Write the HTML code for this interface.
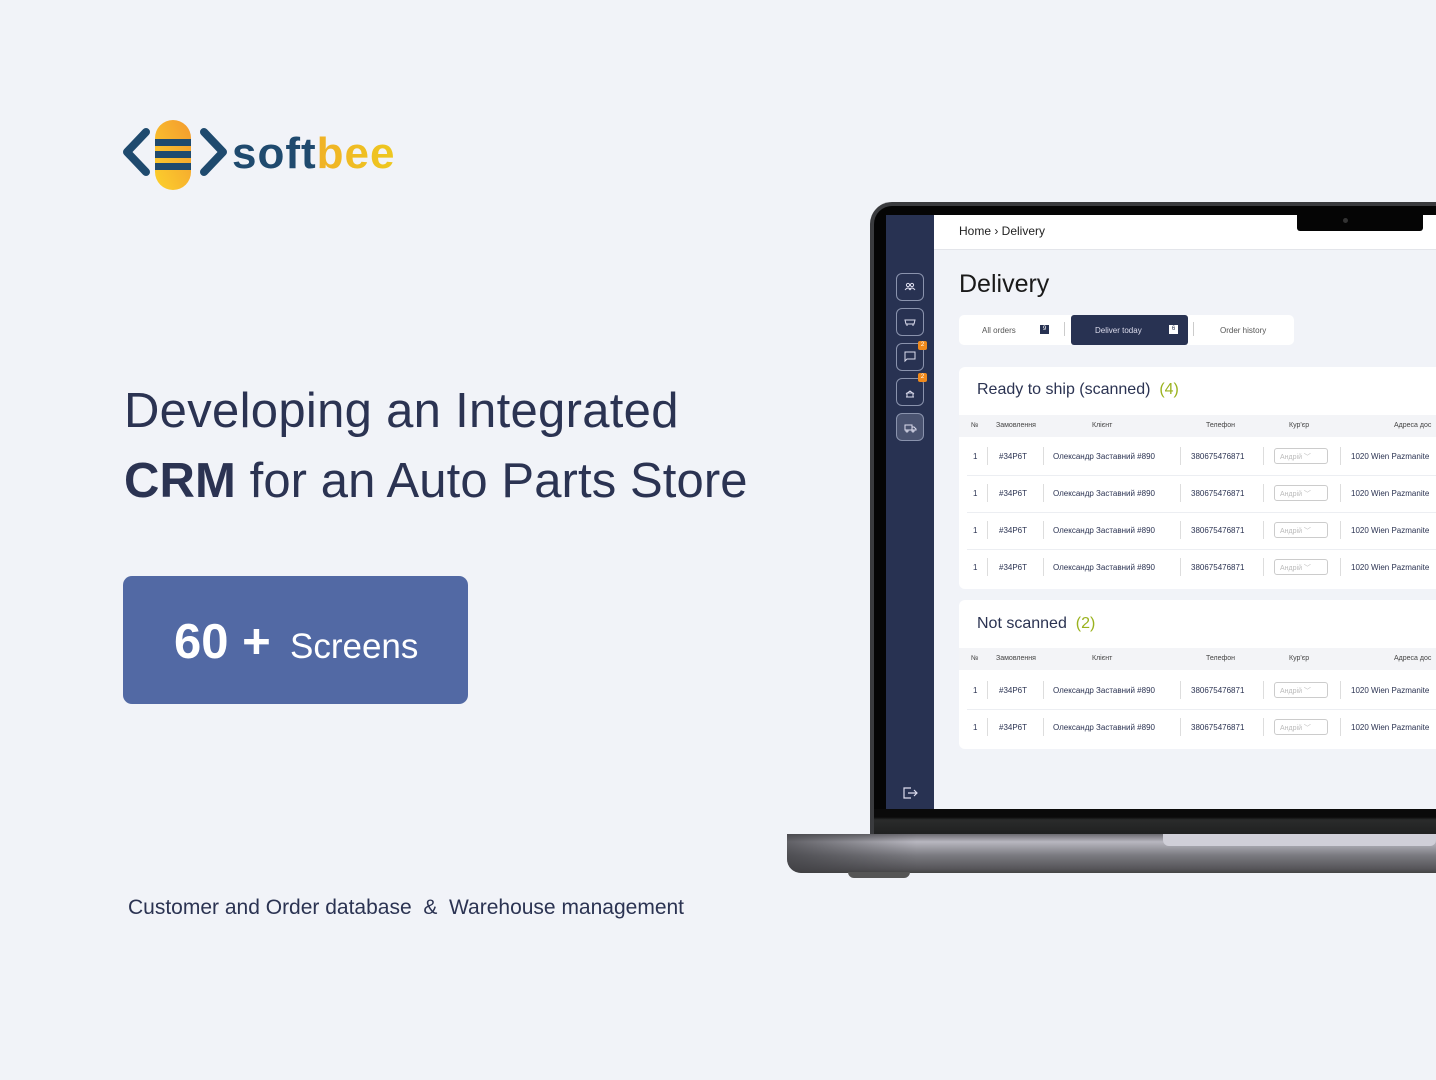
<!DOCTYPE html>
<html><head><meta charset="utf-8"><style>
*{margin:0;padding:0;box-sizing:border-box}
body{width:1436px;height:1080px;background:#f1f3f8;font-family:"Liberation Sans",sans-serif;position:relative;overflow:hidden;color:#2b3352}
.a{position:absolute}
.h{font-size:49px;color:#2b3352;white-space:nowrap;letter-spacing:0.3px}
.t{font-size:8px;color:#2b3352;white-space:nowrap}
.th{font-size:7px;color:#444;white-space:nowrap}
.sep{position:absolute;width:1px;height:18px;background:#ddd}
.sel{position:absolute;width:54px;height:16px;border:1px solid #ccc;border-radius:3px;font-size:7px;color:#bbb;padding:3px 5px}
.sb{position:absolute;left:896px;width:28px;height:28px;border:1px solid #8a93ad;border-radius:6px}
.badge{position:absolute;width:9px;height:9px;background:#f08a1c;border-radius:2px;color:#fff;font-size:6px;text-align:center;line-height:9px}
</style></head><body>

<svg class="a" style="left:120px;top:118px" width="300" height="74" viewBox="0 0 300 74">
<defs><linearGradient id="g" x1="0" y1="1" x2="1" y2="0"><stop offset="0" stop-color="#fcd12c"/><stop offset="1" stop-color="#f39a2f"/></linearGradient>
<linearGradient id="g2" x1="0" y1="0" x2="1" y2="0"><stop offset="0" stop-color="#f39a2f"/><stop offset="1" stop-color="#eec81f"/></linearGradient></defs>
<path d="M26 14 L7 34 L26 54" fill="none" stroke="#1f4a6e" stroke-width="8" stroke-linecap="round" stroke-linejoin="round"/>
<path d="M84 14 L103 34 L84 54" fill="none" stroke="#1f4a6e" stroke-width="8" stroke-linecap="round" stroke-linejoin="round"/>
<rect x="35" y="2" width="36" height="70" rx="18" fill="url(#g)"/>
<rect x="35" y="21" width="36" height="7" fill="#1f4a6e"/>
<rect x="35" y="33" width="36" height="7" fill="#1f4a6e"/>
<rect x="35" y="45" width="36" height="7" fill="#1f4a6e"/>
<text x="112" y="50" font-family="Liberation Sans,sans-serif" font-weight="bold" font-size="44" fill="#1f4a6e" letter-spacing="1">soft<tspan fill="url(#g2)">bee</tspan></text>
</svg>

<div class="a h" style="left:124px;top:383px">Developing an Integrated</div>
<div class="a h" style="left:124px;top:453px;letter-spacing:0.1px"><b>CRM</b> for an Auto Parts Store</div>

<div class="a" style="left:123px;top:576px;width:345px;height:128px;background:#5269a4;border-radius:9px;color:#fff">
 <span class="a" style="left:51px;top:38px;font-size:49px;font-weight:bold;white-space:nowrap">60 +</span>
 <span class="a" style="left:167px;top:51px;font-size:35px;white-space:nowrap">Screens</span>
</div>

<div class="a" style="left:128px;top:896px;font-size:21px;color:#2b3352;white-space:nowrap">Customer and Order database &nbsp;&amp;&nbsp; Warehouse management</div>

<div class="a" style="left:870px;top:202px;width:600px;height:640px;background:#3a3b3e;border-radius:22px 0 0 0"></div>
<div class="a" style="left:874px;top:206px;width:600px;height:630px;background:#050505;border-radius:18px 0 0 0"></div>
<div class="a" style="left:886px;top:215px;width:48px;height:594px;background:#283252"></div>
<div class="a" style="left:934px;top:215px;width:502px;height:594px;background:#f1f3f8"></div>
<div class="a" style="left:934px;top:215px;width:502px;height:35px;background:#fff;border-bottom:1px solid #e3e5ea"></div>
<div class="a" style="left:1297px;top:215px;width:126px;height:16px;background:#050505;border-radius:0 0 3px 3px"></div>
<div class="a" style="left:1343px;top:218px;width:5px;height:5px;background:#333;border-radius:50%"></div>
<div class="a" style="left:874px;top:809px;width:562px;height:27px;background:linear-gradient(#0a0a0a 0,#0a0a0a 30%,#2a2b2b 40%,#1e1f1f 100%)"></div>
<div class="a" style="left:787px;top:834px;width:649px;height:39px;border-radius:0 0 0 14px;background:linear-gradient(#6b6a70 0,#b8b7c0 20%,#7a7a80 55%,#555458 90%,#444 100%)"></div>
<div class="a" style="left:787px;top:834px;width:649px;height:39px;border-radius:0 0 0 14px;background:linear-gradient(90deg,rgba(60,60,64,.7),rgba(0,0,0,0) 20%)"></div>
<div class="a" style="left:1163px;top:834px;width:273px;height:12px;background:#d0cfd8;border-radius:0 0 6px 6px"></div>
<div class="a" style="left:848px;top:872px;width:62px;height:6px;background:#555;border-radius:0 0 6px 6px"></div>

<div class="sb" style="top:273px"></div>
<div class="sb" style="top:308px"></div>
<div class="sb" style="top:343px"></div>
<div class="sb" style="top:378px"></div>
<div class="sb" style="top:413px;background:#4a5370"></div>
<div class="badge" style="left:918px;top:341px">2</div>
<div class="badge" style="left:918px;top:373px">2</div>
<svg class="a" style="left:896px;top:273px" width="28" height="170" viewBox="0 0 28 170" fill="none" stroke="#dde" stroke-width="1">
<circle cx="12" cy="12" r="1.6"/><circle cx="16" cy="12" r="1.6"/><path d="M9 17q3-4 6 0M13 17q3-4 6 0"/>
<path d="M9 47h10l-1 4h-8zM11 51v2M17 51v2"/>
<path d="M9 79h10v7h-8l-2 2z"/>
<path d="M10 121l4-3 4 3M11 120h6v4h-6zM10 124h8"/>
<path d="M9 152h7v5h-7zM16 154h2l2 2v1h-4"/><circle cx="11" cy="158" r="1"/><circle cx="17" cy="158" r="1"/>
</svg>
<svg class="a" style="left:902px;top:786px" width="16" height="14" viewBox="0 0 16 14" fill="none" stroke="#dde" stroke-width="1.2"><path d="M9 2H2v10h7M6 7h9M12 4l3 3-3 3"/></svg>

<div class="a" style="left:959px;top:224px;font-size:12px;color:#222;white-space:nowrap">Home &rsaquo; Delivery</div>
<div class="a" style="left:959px;top:270px;font-size:25px;color:#1a1a1a">Delivery</div>
<div class="a" style="left:959px;top:315px;width:335px;height:30px;background:#fff;border-radius:5px"></div>
<div class="a" style="left:1071px;top:315px;width:117px;height:30px;background:#283252;border-radius:3px"></div>
<div class="a t" style="left:982px;top:326px;color:#555">All orders</div>
<div class="a" style="left:1040px;top:325px;width:9px;height:9px;background:#283252;color:#fff;font-size:6px;text-align:center;line-height:9px">9</div>
<div class="a" style="left:1064px;top:322px;width:1px;height:14px;background:#ccc"></div>
<div class="a t" style="left:1095px;top:326px;color:#dde">Deliver today</div>
<div class="a" style="left:1169px;top:325px;width:9px;height:9px;background:#fff;color:#283252;font-size:6px;text-align:center;line-height:9px">6</div>
<div class="a" style="left:1193px;top:322px;width:1px;height:14px;background:#ccc"></div>
<div class="a t" style="left:1220px;top:326px;color:#555">Order history</div>

<div class="a" style="left:959px;top:367px;width:490px;height:222px;background:#fff;border-radius:6px"></div>
<div class="a" style="left:977px;top:381px;font-size:16px;color:#2b3352;white-space:nowrap">Ready to ship (scanned) &nbsp;<span style="color:#9ab21e">(4)</span></div>
<div class="a" style="left:959px;top:415px;width:477px;height:22px;background:#f3f4f7"></div>
<div class="a th" style="left:971px;top:422px">№</div><div class="a th" style="left:996px;top:422px">Замовлення</div><div class="a th" style="left:1092px;top:422px">Клієнт</div><div class="a th" style="left:1206px;top:422px">Телефон</div><div class="a th" style="left:1289px;top:422px">Кур'єр</div><div class="a th" style="left:1394px;top:422px">Адреса дос</div>

<div class="a" style="left:959px;top:600px;width:490px;height:149px;background:#fff;border-radius:6px"></div>
<div class="a" style="left:977px;top:615px;font-size:16px;color:#2b3352;white-space:nowrap">Not scanned &nbsp;<span style="color:#9ab21e">(2)</span></div>
<div class="a" style="left:959px;top:648px;width:477px;height:22px;background:#f3f4f7"></div>
<div class="a th" style="left:971px;top:655px">№</div><div class="a th" style="left:996px;top:655px">Замовлення</div><div class="a th" style="left:1092px;top:655px">Клієнт</div><div class="a th" style="left:1206px;top:655px">Телефон</div><div class="a th" style="left:1289px;top:655px">Кур'єр</div><div class="a th" style="left:1394px;top:655px">Адреса дос</div>

<div class="a" style="left:0;top:447px"><div class="a t" style="left:973px;top:5px">1</div><div class="sep" style="left:987px"></div><div class="a t" style="left:999px;top:5px">#34P6T</div><div class="sep" style="left:1043px"></div><div class="a t" style="left:1053px;top:5px">Олександр Заставний #890</div><div class="sep" style="left:1180px"></div><div class="a t" style="left:1191px;top:5px">380675476871</div><div class="sep" style="left:1263px"></div><div class="sel" style="left:1274px;top:1px">Андрій ﹀</div><div class="sep" style="left:1340px"></div><div class="a t" style="left:1351px;top:5px">1020 Wien Pazmanite</div><div class="a" style="left:967px;top:28px;width:469px;height:1px;background:#eceef2"></div></div>
<div class="a" style="left:0;top:484px"><div class="a t" style="left:973px;top:5px">1</div><div class="sep" style="left:987px"></div><div class="a t" style="left:999px;top:5px">#34P6T</div><div class="sep" style="left:1043px"></div><div class="a t" style="left:1053px;top:5px">Олександр Заставний #890</div><div class="sep" style="left:1180px"></div><div class="a t" style="left:1191px;top:5px">380675476871</div><div class="sep" style="left:1263px"></div><div class="sel" style="left:1274px;top:1px">Андрій ﹀</div><div class="sep" style="left:1340px"></div><div class="a t" style="left:1351px;top:5px">1020 Wien Pazmanite</div><div class="a" style="left:967px;top:28px;width:469px;height:1px;background:#eceef2"></div></div>
<div class="a" style="left:0;top:521px"><div class="a t" style="left:973px;top:5px">1</div><div class="sep" style="left:987px"></div><div class="a t" style="left:999px;top:5px">#34P6T</div><div class="sep" style="left:1043px"></div><div class="a t" style="left:1053px;top:5px">Олександр Заставний #890</div><div class="sep" style="left:1180px"></div><div class="a t" style="left:1191px;top:5px">380675476871</div><div class="sep" style="left:1263px"></div><div class="sel" style="left:1274px;top:1px">Андрій ﹀</div><div class="sep" style="left:1340px"></div><div class="a t" style="left:1351px;top:5px">1020 Wien Pazmanite</div><div class="a" style="left:967px;top:28px;width:469px;height:1px;background:#eceef2"></div></div>
<div class="a" style="left:0;top:558px"><div class="a t" style="left:973px;top:5px">1</div><div class="sep" style="left:987px"></div><div class="a t" style="left:999px;top:5px">#34P6T</div><div class="sep" style="left:1043px"></div><div class="a t" style="left:1053px;top:5px">Олександр Заставний #890</div><div class="sep" style="left:1180px"></div><div class="a t" style="left:1191px;top:5px">380675476871</div><div class="sep" style="left:1263px"></div><div class="sel" style="left:1274px;top:1px">Андрій ﹀</div><div class="sep" style="left:1340px"></div><div class="a t" style="left:1351px;top:5px">1020 Wien Pazmanite</div></div>
<div class="a" style="left:0;top:681px"><div class="a t" style="left:973px;top:5px">1</div><div class="sep" style="left:987px"></div><div class="a t" style="left:999px;top:5px">#34P6T</div><div class="sep" style="left:1043px"></div><div class="a t" style="left:1053px;top:5px">Олександр Заставний #890</div><div class="sep" style="left:1180px"></div><div class="a t" style="left:1191px;top:5px">380675476871</div><div class="sep" style="left:1263px"></div><div class="sel" style="left:1274px;top:1px">Андрій ﹀</div><div class="sep" style="left:1340px"></div><div class="a t" style="left:1351px;top:5px">1020 Wien Pazmanite</div><div class="a" style="left:967px;top:28px;width:469px;height:1px;background:#eceef2"></div></div>
<div class="a" style="left:0;top:718px"><div class="a t" style="left:973px;top:5px">1</div><div class="sep" style="left:987px"></div><div class="a t" style="left:999px;top:5px">#34P6T</div><div class="sep" style="left:1043px"></div><div class="a t" style="left:1053px;top:5px">Олександр Заставний #890</div><div class="sep" style="left:1180px"></div><div class="a t" style="left:1191px;top:5px">380675476871</div><div class="sep" style="left:1263px"></div><div class="sel" style="left:1274px;top:1px">Андрій ﹀</div><div class="sep" style="left:1340px"></div><div class="a t" style="left:1351px;top:5px">1020 Wien Pazmanite</div></div>

</body></html>
